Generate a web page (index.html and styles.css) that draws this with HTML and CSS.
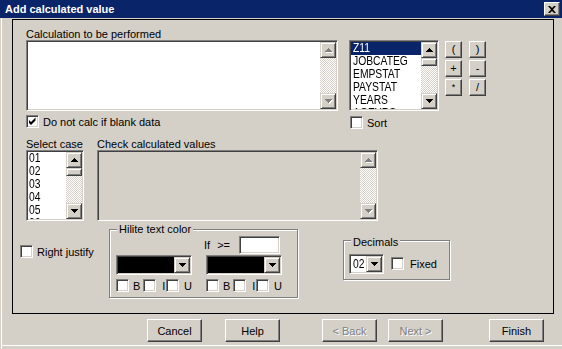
FILE: index.html
```html
<!DOCTYPE html>
<html>
<head>
<meta charset="utf-8">
<link rel="stylesheet" href="styles.css">
</head>
<body>
<div class="win">
  <div class="titlebar">
    <span class="title">Add calculated value</span>
    <span class="close"><svg width="8" height="7" viewBox="0 0 8 7"><path d="M0 0h2l2 2 2-2h2L5 3.5 8 7H6L4 5 2 7H0l3-3.5z"/></svg></span>
  </div>

  <div class="frame">
    <div class="row1">
      <div class="calc-col">
        <div class="lbl">Calculation to be performed</div>
        <div class="field sunken calc-box">
          <div class="field-body"></div>
          <div class="vscroll">
            <div class="sbtn"><svg class="arr dis" width="7" height="4" viewBox="0 0 7 4"><path d="M3 0h1v1h1v1h1v1h1v1H0V3h1V2h1V1h1z"/></svg></div>
            <div class="track"></div>
            <div class="sbtn"><svg class="arr dis" width="7" height="4" viewBox="0 0 7 4"><path d="M0 0h7v1H6v1H5v1H4v1H3V3H2V2H1V1H0z"/></svg></div>
          </div>
        </div>
        <div class="chk blank-chk">
          <span class="box"><svg width="9" height="9" viewBox="0 0 9 9"><path d="M1 3l2 2 4.5-4.5v3L3 8 1 6z"/></svg></span>
          <span class="chk-text">Do not calc if blank data</span>
        </div>
      </div>

      <div class="var-col">
        <div class="field sunken var-list">
          <div class="items">
            <div class="item sel"><span class="nt">Z11</span></div>
            <div class="item"><span class="nt">JOBCATEG</span></div>
            <div class="item"><span class="nt">EMPSTAT</span></div>
            <div class="item"><span class="nt">PAYSTAT</span></div>
            <div class="item"><span class="nt">YEARS</span></div>
            <div class="item part"><span class="nt">AGEYRS</span></div>
          </div>
          <div class="vscroll">
            <div class="sbtn"><svg class="arr" width="7" height="4" viewBox="0 0 7 4"><path d="M3 0h1v1h1v1h1v1h1v1H0V3h1V2h1V1h1z"/></svg></div>
            <div class="thumb"></div>
            <div class="track"></div>
            <div class="sbtn"><svg class="arr" width="7" height="4" viewBox="0 0 7 4"><path d="M0 0h7v1H6v1H5v1H4v1H3V3H2V2H1V1H0z"/></svg></div>
          </div>
        </div>
        <div class="chk sort-chk">
          <span class="box"></span>
          <span class="chk-text">Sort</span>
        </div>
      </div>

      <div class="ops">
        <div class="raised op">(</div>
        <div class="raised op">)</div>
        <div class="raised op">+</div>
        <div class="raised op">-</div>
        <div class="raised op star">*</div>
        <div class="raised op">/</div>
      </div>
    </div>

    <div class="row2">
      <div class="case-col">
        <div class="lbl">Select case</div>
        <div class="field sunken case-list">
          <div class="items">
            <div class="item"><span class="nt">01</span></div>
            <div class="item"><span class="nt">02</span></div>
            <div class="item"><span class="nt">03</span></div>
            <div class="item"><span class="nt">04</span></div>
            <div class="item"><span class="nt">05</span></div>
            <div class="item part"><span class="nt">06</span></div>
          </div>
          <div class="vscroll">
            <div class="sbtn"><svg class="arr" width="7" height="4" viewBox="0 0 7 4"><path d="M3 0h1v1h1v1h1v1h1v1H0V3h1V2h1V1h1z"/></svg></div>
            <div class="thumb"></div>
            <div class="track"></div>
            <div class="sbtn"><svg class="arr" width="7" height="4" viewBox="0 0 7 4"><path d="M0 0h7v1H6v1H5v1H4v1H3V3H2V2H1V1H0z"/></svg></div>
          </div>
        </div>
      </div>
      <div class="check-col">
        <div class="lbl">Check calculated values</div>
        <div class="field sunken check-box">
          <div class="field-body gray"></div>
          <div class="vscroll">
            <div class="sbtn"><svg class="arr dis" width="7" height="4" viewBox="0 0 7 4"><path d="M3 0h1v1h1v1h1v1h1v1H0V3h1V2h1V1h1z"/></svg></div>
            <div class="track"></div>
            <div class="sbtn"><svg class="arr dis" width="7" height="4" viewBox="0 0 7 4"><path d="M0 0h7v1H6v1H5v1H4v1H3V3H2V2H1V1H0z"/></svg></div>
          </div>
        </div>
      </div>
    </div>

    <div class="row3">
      <div class="chk right-chk">
        <span class="box"></span>
        <span class="chk-text">Right justify</span>
      </div>

      <div class="group hilite">
        <span class="legend hilite-legend">Hilite text color</span>
        <div class="if-row">
          <span class="if">If</span><span class="ge">&gt;=</span>
          <div class="sunken if-edit"></div>
        </div>
        <div class="color-cols">
          <div class="color-col">
            <div class="sunken combo color-combo">
              <div class="swatch"></div>
              <div class="sbtn"><svg class="arr" width="7" height="4" viewBox="0 0 7 4"><path d="M0 0h7v1H6v1H5v1H4v1H3V3H2V2H1V1H0z"/></svg></div>
            </div>
            <div class="biu">
              <span class="box"></span><span class="biu-l l-b">B</span>
              <span class="box"></span><span class="biu-l l-i">I</span>
              <span class="box"></span><span class="biu-l l-u">U</span>
            </div>
          </div>
          <div class="color-col">
            <div class="sunken combo color-combo">
              <div class="swatch"></div>
              <div class="sbtn"><svg class="arr" width="7" height="4" viewBox="0 0 7 4"><path d="M0 0h7v1H6v1H5v1H4v1H3V3H2V2H1V1H0z"/></svg></div>
            </div>
            <div class="biu">
              <span class="box"></span><span class="biu-l l-b">B</span>
              <span class="box"></span><span class="biu-l l-i">I</span>
              <span class="box"></span><span class="biu-l l-u">U</span>
            </div>
          </div>
        </div>
      </div>

      <div class="group decimals">
        <span class="legend dec-legend">Decimals</span>
        <div class="dec-row">
          <div class="sunken combo dec-combo">
            <div class="combo-text"><span class="nt">02</span></div>
            <div class="sbtn"><svg class="arr" width="7" height="4" viewBox="0 0 7 4"><path d="M0 0h7v1H6v1H5v1H4v1H3V3H2V2H1V1H0z"/></svg></div>
          </div>
          <div class="chk fixed-chk">
            <span class="box"></span>
            <span class="chk-text">Fixed</span>
          </div>
        </div>
      </div>
    </div>
  </div>

  <div class="buttons">
    <div class="raised btn b-cancel">Cancel</div>
    <div class="raised btn b-help">Help</div>
    <div class="raised btn disabled b-back">&lt; Back</div>
    <div class="raised btn disabled b-next">Next &gt;</div>
    <div class="raised btn b-finish">Finish</div>
  </div>
</div>
</body>
</html>
```

FILE: styles.css
```css
* { box-sizing: border-box; margin: 0; padding: 0; }
html, body { width: 562px; height: 349px; overflow: hidden; background: #d4d0c8; }
body { font: 11px/12px "Liberation Sans", Arial, sans-serif; color: #000; }

.win {
  width: 562px; height: 349px;
  background: #d4d0c8;
  box-shadow: inset 1px 0 #d4d0c8, inset 2px 0 #fff, inset 0 -3px #d4d0c8, inset 0 -4px #fff;
}

/* title bar */
.titlebar {
  height: 18px; background: #0a246a; color: #fff;
  display: flex; align-items: center; justify-content: space-between;
  padding: 0 2px 0 5px;
  font-weight: bold; line-height: 18px;
}
.close {
  width: 16px; height: 14px;
  background: #d4d0c8;
  border: 1px solid; border-color: #fff #404040 #404040 #fff;
  box-shadow: inset -1px -1px #808080;
  display: flex; align-items: center; justify-content: center;
}
.close svg { display: block; fill: #000; }

/* bevels */
.raised {
  background: #d4d0c8;
  border: 1px solid; border-color: #fff #404040 #404040 #fff;
  box-shadow: inset -1px -1px #808080;
}
.sunken {
  border: 1px solid; border-color: #808080 #fff #fff #808080;
  box-shadow: inset 1px 1px #404040, inset -1px -1px #d4d0c8;
  padding: 1px;
  background: #fff;
}

/* frame */
.frame {
  margin: 1px 0 0 12px;
  width: 542px; height: 295px;
  border: 1px solid #000;
  padding: 8px 0 0 13px;
}
.lbl { height: 12px; line-height: 12px; white-space: nowrap; }

.row1 { display: flex; height: 100px; }
.calc-col { width: 312px; }
.calc-box { height: 71px; }

.field { display: flex; }
.field-body { flex: 1; }
.field-body.gray { background: #d4d0c8; }
.check-box { background: #d4d0c8; }

.vscroll { width: 16px; display: flex; flex-direction: column; flex: none; }
.track {
  flex: 1;
  background: repeating-conic-gradient(#fff 0 25%, #d4d0c8 0 50%) 0 0 / 2px 2px;
}
.thumb {
  height: 8px; flex: none;
  background: #d4d0c8;
  border: 1px solid; border-color: #d4d0c8 #404040 #404040 #d4d0c8;
  box-shadow: inset 1px 1px #fff, inset -1px -1px #808080;
}
.sbtn {
  width: 16px; height: 16px; flex: none;
  background: #d4d0c8;
  border: 1px solid; border-color: #d4d0c8 #404040 #404040 #d4d0c8;
  box-shadow: inset 1px 1px #fff, inset -1px -1px #808080;
  display: flex; align-items: center; justify-content: center;
}
.arr { display: block; fill: #000; }
.arr.dis { fill: #808080; filter: drop-shadow(1px 1px 0 #fff); }

/* checkbox */
.chk { display: flex; align-items: center; height: 13px; white-space: nowrap; }
.box {
  width: 13px; height: 13px; flex: none;
  background: #fff;
  border: 1px solid; border-color: #808080 #fff #fff #808080;
  box-shadow: inset 1px 1px #404040, inset -1px -1px #d4d0c8;
  padding: 1px;
  display: block;
}
.box svg { display: block; fill: #000; }
.chk-text { margin-left: 4px; line-height: 12px; }
.blank-chk { margin-top: 4px; }

/* lists */
.var-col { width: 90px; margin-left: 11px; padding-top: 12px; }
.var-list { height: 71px; }
.items {
  flex: 1; overflow: hidden;
  font-size: 12px; line-height: 13px;
}
.item { padding-left: 2px; height: 13px; white-space: nowrap; overflow: hidden; }
.item.part { height: 3px; }
.nt { display: inline-block; transform: scaleX(0.86); transform-origin: 0 0; }
.item.sel { background: #0a246a; color: #fff; }
.sort-chk { margin-top: 5px; margin-left: 1px; }

.ops {
  margin-left: 6px; padding-top: 13px;
  display: grid; grid-template-columns: 17px 17px; grid-auto-rows: 17px;
  gap: 2px 7px; align-content: start;
}
.op { display: flex; align-items: center; justify-content: center; font-size: 11px; line-height: 11px; }
.op.star { font-size: 9px; }

/* row 2 */
.row2 { display: flex; margin-top: 10px; }
.case-col { width: 58px; }
.case-list { height: 71px; }
.case-list .item { padding-left: 1px; }
.check-col { width: 281px; margin-left: 13px; }
.check-box { height: 71px; }

/* row 3 */
.row3 { display: flex; align-items: flex-start; margin-top: 8px; margin-left: -6px; }
.right-chk { width: 89px; margin-top: 16px; }

.group {
  position: relative;
  border: 1px solid #808080;
  box-shadow: 1px 1px 0 #fff, inset 1px 1px 0 #fff;
}
.legend {
  position: absolute; background: #d4d0c8; padding: 0 2px;
  line-height: 12px; white-space: nowrap;
}
.hilite { width: 189px; height: 69px; padding: 6px 0 0 6px; }
.hilite-legend { left: 7px; top: -7px; }

.if-row { display: flex; align-items: center; height: 18px; padding-left: 88px; }
.ge { margin-left: 7px; }
.if-edit { width: 41px; height: 18px; margin-left: 9px; }

.color-cols { display: flex; gap: 14px; margin-top: 1px; }
.color-col { width: 76px; }
.combo { display: flex; height: 20px; }
.color-combo { width: 76px; }
.swatch { flex: 1; background: #000; }
.biu { display: flex; align-items: center; height: 13px; margin-top: 4px; white-space: nowrap; }
.biu-l { line-height: 12px; }
.l-b { margin-left: 4px; width: 13px; }
.l-i { margin-left: 6px; width: 5px; }
.l-u { margin-left: 5px; }

.decimals { width: 107px; height: 40px; margin-left: 45px; margin-top: 11px; padding: 13px 0 0 5px; }
.dec-legend { left: 7px; top: -5px; }
.dec-row { display: flex; align-items: flex-start; }
.dec-combo { width: 35px; }
.combo-text { flex: 1; padding-left: 2px; font-size: 12px; line-height: 16px; }
.fixed-chk { margin-left: 7px; margin-top: 3px; }
.fixed-chk .chk-text { margin-left: 6px; }

/* bottom buttons */
.buttons { display: flex; margin-top: 5px; height: 23px; }
.btn {
  width: 55px; height: 23px;
  display: flex; align-items: center; justify-content: center;
  line-height: 12px;
}
.btn.disabled { color: #808080; text-shadow: 1px 1px 0 #fff; }
.b-cancel { margin-left: 147px; }
.b-help { margin-left: 23px; }
.b-back { margin-left: 42px; }
.b-next { margin-left: 11px; }
.b-finish { margin-left: 46px; }
```
